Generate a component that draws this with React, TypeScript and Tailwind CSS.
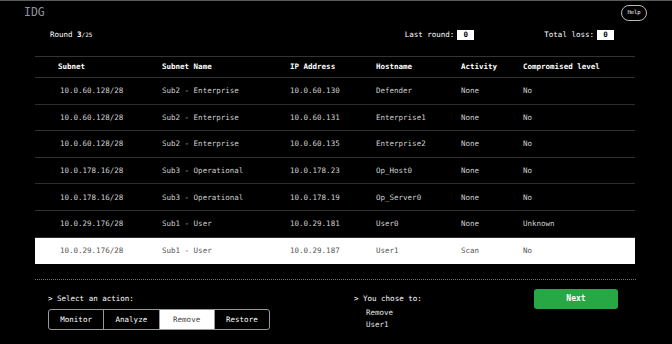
import React from 'react';

interface Host {
  subnet: string;
  subnetName: string;
  ip: string;
  hostname: string;
  activity: string;
  compromised: string;
}

const hosts: Host[] = [
  { subnet: '10.0.60.128/28', subnetName: 'Sub2 - Enterprise', ip: '10.0.60.130', hostname: 'Defender', activity: 'None', compromised: 'No' },
  { subnet: '10.0.60.128/28', subnetName: 'Sub2 - Enterprise', ip: '10.0.60.131', hostname: 'Enterprise1', activity: 'None', compromised: 'No' },
  { subnet: '10.0.60.128/28', subnetName: 'Sub2 - Enterprise', ip: '10.0.60.135', hostname: 'Enterprise2', activity: 'None', compromised: 'No' },
  { subnet: '10.0.178.16/28', subnetName: 'Sub3 - Operational', ip: '10.0.178.23', hostname: 'Op_Host0', activity: 'None', compromised: 'No' },
  { subnet: '10.0.178.16/28', subnetName: 'Sub3 - Operational', ip: '10.0.178.19', hostname: 'Op_Server0', activity: 'None', compromised: 'No' },
  { subnet: '10.0.29.176/28', subnetName: 'Sub1 - User', ip: '10.0.29.181', hostname: 'User0', activity: 'None', compromised: 'Unknown' },
  { subnet: '10.0.29.176/28', subnetName: 'Sub1 - User', ip: '10.0.29.187', hostname: 'User1', activity: 'Scan', compromised: 'No' },
];

const actions = ['Monitor', 'Analyze', 'Remove', 'Restore'];

const mono = { fontFamily: '"DejaVu Sans Mono", "Liberation Mono", monospace' };

const App: React.FC = () => {
  const selected = 6;
  const action = 'Remove';

  return (
    <div
      className="w-[672px] h-[344px] bg-black border-t border-[#5a5a5a] text-[#d4d4d4] overflow-hidden"
      style={mono}
    >
      {/* Top bar */}
      <div className="flex items-center justify-between pl-6 pr-[25px] pt-[2px] h-[22px]">
        <span className="text-[11.5px] text-[#8e939b] leading-none">IDG</span>
        <button className="w-[26px] h-[16px] rounded-full border border-[#bbb] text-[5.5px] text-white leading-none">
          Help
        </button>
      </div>

      {/* Round + scores */}
      <div className="flex items-center h-[24px] pl-[50px] text-[7.5px] text-white">
        <span>
          Round <span className="font-bold">3</span>
          <span className="text-[6px]">/25</span>
        </span>
        <span className="ml-auto">Last round:</span>
        <span className="ml-[3px] w-[17px] h-[10px] bg-white text-black font-bold flex items-center justify-center">
          0
        </span>
        <span className="ml-[70px]">Total loss:</span>
        <span className="ml-[3px] w-[17px] h-[10px] bg-white text-black font-bold flex items-center justify-center mr-[58px]">
          0
        </span>
      </div>

      {/* Table */}
      <div className="mx-[35px] mt-[9px] w-[600px] text-[7.5px]">
        <div className="flex items-center h-[22px] border-y border-[#333] font-bold text-white">
          <div className="w-[127px] pl-[23px]">Subnet</div>
          <div className="w-[128px]">Subnet Name</div>
          <div className="w-[86px]">IP Address</div>
          <div className="w-[85px]">Hostname</div>
          <div className="w-[62px]">Activity</div>
          <div className="flex-1">Compromised level</div>
        </div>
        {hosts.map((h, i) => {
          const isSelected = i === selected;
          return (
            <div
              key={i}
              className={`flex items-center h-[26.6px] ${
                isSelected ? 'bg-white text-[#555]' : 'border-b border-[#2e2e2e] text-[#cfcfcf]'
              }`}
            >
              <div className="w-[127px] pl-[25px]">{h.subnet}</div>
              <div className="w-[128px]">{h.subnetName}</div>
              <div className="w-[86px]">{h.ip}</div>
              <div className="w-[85px]">{h.hostname}</div>
              <div className="w-[62px]">{h.activity}</div>
              <div className="flex-1">{h.compromised}</div>
            </div>
          );
        })}
      </div>

      {/* Divider */}
      <div className="mx-[35px] mt-[15px] w-[601px] border-t border-dotted border-[#777]" />

      {/* Action panel */}
      <div className="flex pl-[48px] mt-[14px] text-[7.5px]">
        <div className="w-[306px]">
          <div className="text-white h-[10px] leading-[10px]">&gt; Select an action:</div>
          <div className="mt-[5px] flex w-[222px] h-[21px] border border-[#999] rounded-[3px] overflow-hidden">
            {actions.map((a, i) => (
              <div
                key={a}
                className={`flex-1 flex items-center justify-center ${
                  i > 0 ? 'border-l border-[#999]' : ''
                } ${a === action ? 'bg-white text-[#444]' : 'text-white'}`}
              >
                {a}
              </div>
            ))}
          </div>
        </div>
        <div className="w-[180px]">
          <div className="text-white h-[10px] leading-[10px]">&gt; You chose to:</div>
          <div className="pl-[12px] mt-[3px] leading-[12px] text-[#e5e5e5]">
            <div>Remove</div>
            <div>User1</div>
          </div>
        </div>
        <div className="-mt-[5px]">
          <button className="w-[84px] h-[20px] rounded-[3px] bg-[#28a745] text-white font-bold text-[8px]">
            Next
          </button>
        </div>
      </div>
    </div>
  );
};

export default App;
